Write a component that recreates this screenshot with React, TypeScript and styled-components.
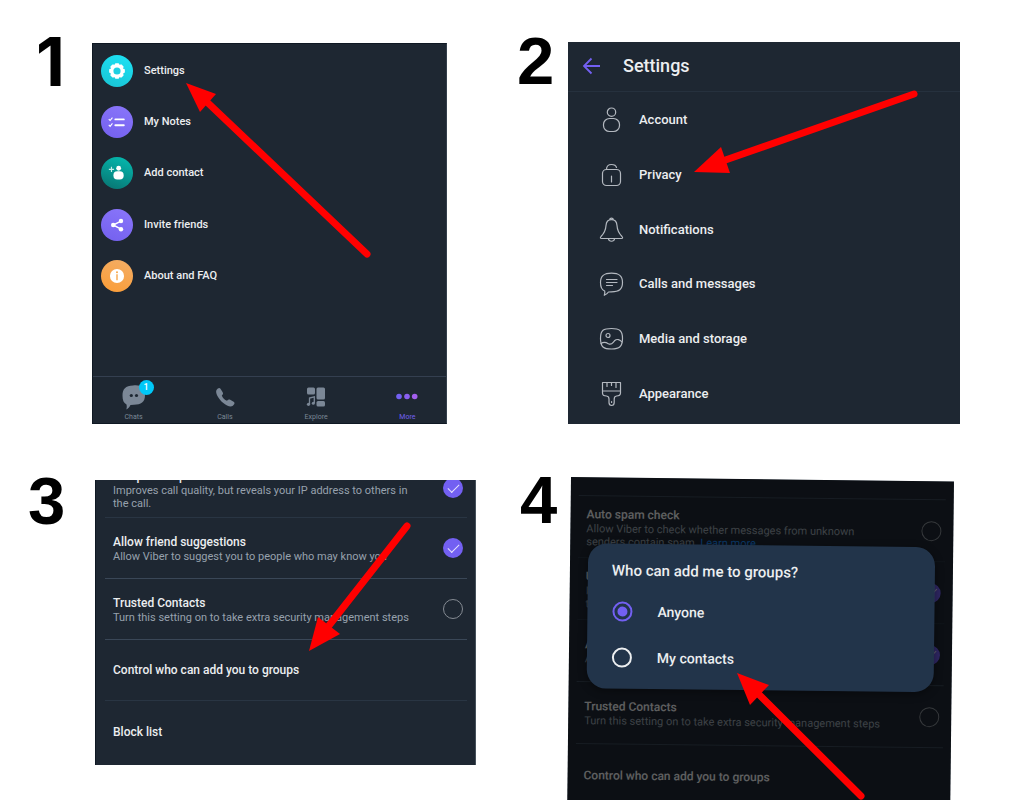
import React from "react";
import styled, { createGlobalStyle, css } from "styled-components";

const GlobalStyle = createGlobalStyle`
  * { box-sizing: border-box; }
  body { margin: 0; background: #fff; font-family: Roboto, "Liberation Sans", sans-serif; }
  h2, h3, p, ul { margin: 0; padding: 0; }
  ul { list-style: none; }
`;

const Page = styled.main`
  display: grid;
  grid-template-columns: 448fr 444fr;
  grid-template-rows: auto 1fr;
  column-gap: 40px;
  row-gap: 53px;
  align-items: start;
  height: 100vh;
  overflow: hidden;
  padding: 42px 57px 0 28px;
`;

const Step = styled.section<{ $num: number; $end?: number }>`
  display: grid;
  grid-template-columns: ${(p) => p.$num}px minmax(0, 1fr);
  align-items: start;
  padding-right: ${(p) => p.$end ?? 0}px;
`;

const StepNumber = styled.h2<{ $indent?: number; $lift: number; $footless?: boolean }>`
  margin: -${(p) => p.$lift}px 0 0 ${(p) => p.$indent ?? 0}px;
  font-family: "Liberation Sans", Arial, sans-serif;
  font-size: 67px;
  font-weight: 700;
  line-height: 68px;
  color: #000;
  ${(p) =>
    p.$footless &&
    css`
      font-family: Inter, sans-serif;
    `}
`;

const Stage = styled.div<{ $top?: number }>`
  position: relative;
  margin-top: ${(p) => p.$top ?? 0}px;
`;

const Screen = styled.div`
  display: flex;
  flex-direction: column;
  overflow: hidden;
  background: #1e2732;
  color: #eceef0;
`;

const MoreScreen = styled(Screen)`
  border: 1px solid #0f1823;
  border-right-color: #35404c;
`;

const MenuList = styled.ul`
  display: grid;
  grid-template-rows: repeat(5, 1fr);
  height: 258px;
  padding-top: 1px;
`;

const MenuItem = styled.li`
  display: flex;
  align-items: center;
  gap: 11px;
  padding-left: 8px;
  font-size: 11px;
  font-weight: 500;
  line-height: 16px;
`;

const RoundIcon = styled.span<{ $from: string; $to: string }>`
  display: flex;
  width: 32px;
  height: 32px;
  border-radius: 50%;
  background: linear-gradient(200deg, ${(p) => p.$from}, ${(p) => p.$to});
  svg { width: 100%; height: 100%; }
`;

const TabBar = styled.nav`
  display: grid;
  grid-template-columns: repeat(4, 1fr);
  height: 47px;
  margin: 74px -7px 0 -5px;
  border-top: 1px solid #343f50;
`;

const Tab = styled.a<{ $active?: boolean }>`
  position: relative;
  display: flex;
  flex-direction: column;
  align-items: center;
  gap: 1px;
  padding-top: 7px;
  font-size: 7px;
  line-height: 10px;
  text-decoration: none;
  color: ${(p) => (p.$active ? "#7360f2" : "#7b8796")};
`;

const Badge = styled.span`
  position: absolute;
  top: 3px;
  left: calc(50% + 5px);
  width: 15px;
  height: 15px;
  border-radius: 50%;
  background: #00c8f8;
  color: #fff;
  font-size: 9px;
  font-weight: 500;
  line-height: 15px;
  text-align: center;
`;

const AppHeader = styled.header`
  display: flex;
  align-items: center;
  gap: 21px;
  height: 50px;
  padding: 0 0 2px 14px;
  border-bottom: 1px solid #26313e;
`;

const BackButton = styled.button`
  display: flex;
  padding: 0;
  border: 0;
  background: none;
  color: #7360f2;
`;

const AppTitle = styled.h3`
  font-size: 18px;
  font-weight: 500;
  line-height: 24px;
`;

const SettingsList = styled.ul`
  display: grid;
  grid-template-rows: repeat(6, 1fr);
  height: 332px;
  padding: 1px 0 3px;
`;

const SettingsItem = styled.li`
  display: flex;
  align-items: center;
  gap: 15px;
  padding-left: 31px;
  font-size: 13px;
  font-weight: 500;
  line-height: 16px;
  svg { color: #b4b9c0; }
`;

const PrivacyScreen = styled(Screen)`
  height: 285px;
  padding: 0 8px 0 9px;
  border-left: 1px solid #0f1823;
  border-right: 1px solid #46515b;
`;

const TiltedScreen = styled(Screen)`
  position: relative;
  height: 350px;
  padding: 0 8px;
  transform: rotate(0.66deg);
  transform-origin: top left;
`;

const Row = styled.label<{ $tall?: boolean; $strong?: boolean; $clipped?: number }>`
  display: flex;
  flex: none;
  align-items: center;
  justify-content: space-between;
  height: ${(p) => (p.$tall ? 62 : 61)}px;
  padding: 0 4px 0 8px;
  border-bottom: 1px solid ${(p) => (p.$strong ? "#3a4757" : "#293543")};
  ${(p) =>
    p.$clipped &&
    css`
      height: ${p.$clipped}px;
      align-items: flex-end;
      padding-bottom: 7px;
      input { margin-bottom: 12px; }
    `}
  &:last-child { border-bottom: 0; }
`;

const RowText = styled.span`
  display: flex;
  flex-direction: column;
`;

const RowTitle = styled.span`
  font-size: 12px;
  font-weight: 500;
  line-height: 16px;
`;

const RowNote = styled.span`
  font-size: 11px;
  line-height: 13px;
  color: #97a1ad;
  white-space: pre;
`;

const NoteLink = styled.a`
  color: #1a8cff;
  text-decoration: none;
`;

const Toggle = styled.input`
  flex: none;
  display: grid;
  place-items: center;
  appearance: none;
  width: 20px;
  height: 20px;
  margin: 0;
  border: 1px solid #858b93;
  border-radius: 50%;
  &:checked { border: 0; background: #7360f2; }
  &:checked::after {
    content: "";
    width: 10px;
    height: 5px;
    margin-top: -3px;
    border: solid #e6e2ff;
    border-width: 0 0 1px 1px;
    transform: rotate(-45deg);
  }
`;

const Scrim = styled.div`
  position: absolute;
  inset: 0;
  background: rgba(0, 0, 0, 0.6);
`;

const Dialog = styled.fieldset`
  position: absolute;
  top: 66px;
  left: 18px;
  right: 18px;
  min-height: 145px;
  margin: 0;
  padding: 15px 24px 0;
  border: 0;
  border-radius: 19px;
  background: #22344a;
  box-shadow: 0 2px 8px rgba(0, 0, 0, 0.4);
`;

const DialogTitle = styled.h3`
  font-size: 15px;
  font-weight: 500;
  line-height: 24px;
  margin-bottom: 6px;
`;

const Option = styled.label`
  display: flex;
  align-items: center;
  gap: 25px;
  height: 46px;
  padding-left: 1px;
  font-size: 14px;
  font-weight: 500;
`;

const Radio = styled.input`
  display: grid;
  place-items: center;
  appearance: none;
  width: 20px;
  height: 20px;
  margin: 0;
  border: 2px solid #eceef0;
  border-radius: 50%;
  &:checked { border-color: #7360f2; }
  &:checked::after {
    content: "";
    width: 10px;
    height: 10px;
    border-radius: 50%;
    background: #7360f2;
  }
`;

const ArrowLayer = styled.svg`
  position: absolute;
  top: 0;
  left: 0;
  overflow: visible;
  pointer-events: none;
`;

type Point = [number, number];

/* Red callout arrow: `head` is the tip followed by the two barbs. */
function Arrow({ head, tail }: { head: [Point, Point, Point]; tail: Point }) {
  const [, a, b] = head;
  return (
    <ArrowLayer width="1" height="1" aria-hidden="true">
      <line
        x1={(a[0] + b[0]) / 2}
        y1={(a[1] + b[1]) / 2}
        x2={tail[0]}
        y2={tail[1]}
        stroke="#f00"
        strokeWidth="7"
        strokeLinecap="round"
      />
      <polygon points={head.map((p) => p.join(",")).join(" ")} fill="#f00" />
    </ArrowLayer>
  );
}

const GearIcon = () => (
  <svg viewBox="0 0 33 33">
    {[0, 45, 90, 135].map((a) => (
      <rect key={a} x="14.2" y="8.4" width="4.6" height="16.2" rx="1.2" fill="#fff" transform={`rotate(${a} 16.5 16.5)`} />
    ))}
    <circle cx="16.5" cy="16.5" r="6.9" fill="#fff" />
    <circle cx="16.5" cy="16.5" r="3.7" fill="#1fd0e2" />
  </svg>
);

const NotesIcon = () => (
  <svg viewBox="0 0 33 33" fill="none" stroke="#fff">
    <path d="M8 13.5l1.4 1.5 2.4-3M8 19.5l1.4 1.5 2.4-3" strokeWidth="1.1" />
    <path d="M14.8 13.8H23.5M14.8 19.8H23.5" strokeWidth="2" strokeLinecap="round" />
  </svg>
);

const AddContactIcon = () => (
  <svg viewBox="0 0 33 33" fill="#fff">
    <path d="M10.8 10v5.4M8.1 12.7h5.4" stroke="#c8eeea" strokeWidth="1.2" />
    <circle cx="18.2" cy="11.6" r="2.5" />
    <rect x="12.8" y="14.8" width="10.6" height="8.4" rx="4" />
  </svg>
);

const ShareIcon = () => (
  <svg viewBox="0 0 33 33" fill="#fff">
    <path d="M20.6 12.4l-8 4.1 8 4.3" fill="none" stroke="#fff" strokeWidth="1.5" />
    <circle cx="12.6" cy="16.5" r="2.3" />
    <circle cx="20.6" cy="12.3" r="2.3" />
    <circle cx="20.6" cy="20.8" r="2.3" />
  </svg>
);

const InfoIcon = () => (
  <svg viewBox="0 0 33 33">
    <circle cx="16.5" cy="16.5" r="7.3" fill="#fff" />
    <circle cx="16.5" cy="12.6" r="1" fill="#f7a547" />
    <path d="M16.5 14.8v6" stroke="#f7a547" strokeWidth="1.4" />
  </svg>
);

const ChatsIcon = () => (
  <svg width="26" height="27" viewBox="0 0 26 27" fill="#7b8796">
    <path d="M12 1.5C20 .5 24 3.5 24 11S20 20.5 13 20.8L9.5 21C8.5 23.5 7 24.5 5.3 25.5C6 23.5 5.8 22 5.5 20.5C2.5 19 1.5 16 1.5 11.5C1.5 5 4.5 1.8 12 1.5Z" />
    <circle cx="10.3" cy="11.5" r="1.6" fill="#1e2732" />
    <circle cx="15.5" cy="11.5" r="1.6" fill="#1e2732" />
  </svg>
);

const CallsIcon = () => (
  <svg width="26" height="27" viewBox="0 0 26 27" fill="#7b8796">
    <path d="M4.5 6C5.8 4.2 7.3 3.3 8.5 4.7L10.8 8.5C11.4 9.8 10.8 10.6 9.8 11.5C10.6 13.9 12.7 16 15 16.8C16 15.7 17 15.1 18.2 15.8L22 18.1C23.3 19.2 22 20.8 20.5 22C18.5 23.3 14.5 21.8 11 18.8C7 15.4 2.8 9.1 4.5 6Z" />
  </svg>
);

const ExploreIcon = () => (
  <svg width="26" height="27" viewBox="0 0 26 27" fill="#7b8796">
    <rect x="4" y="3.5" width="8" height="7" rx="1.5" />
    <rect x="13.5" y="3.5" width="8.5" height="12" rx="1.5" />
    <rect x="13.5" y="17" width="8.5" height="5.5" rx="1.5" />
    <path d="M6.5 20V14L11.3 12.8V19" fill="none" stroke="#7b8796" strokeWidth="1.3" />
    <circle cx="5.5" cy="20.3" r="1.6" />
    <circle cx="10.3" cy="19.3" r="1.5" />
  </svg>
);

const MoreIcon = () => (
  <svg width="26" height="27" viewBox="0 0 26 27">
    <circle cx="5" cy="12.5" r="2.8" fill="#7360f2" />
    <circle cx="13" cy="12.5" r="2.8" fill="#8a5ff0" />
    <circle cx="20.7" cy="12.5" r="2.8" fill="#a35fee" />
  </svg>
);

const LineIcon = ({ children }: { children: React.ReactNode }) => (
  <svg
    width="25"
    height="26"
    viewBox="0 0 25 26"
    fill="none"
    stroke="currentColor"
    strokeWidth="1.2"
    strokeLinecap="round"
    strokeLinejoin="round"
  >
    {children}
  </svg>
);

const settings = [
  {
    label: "Account",
    icon: (
      <>
        <circle cx="12.5" cy="5.2" r="4.2" />
        <rect x="4.5" y="11.5" width="16" height="13" rx="6" />
      </>
    ),
  },
  {
    label: "Privacy",
    icon: (
      <>
        <rect x="3.5" y="7.5" width="18" height="16" rx="4" />
        <path d="M7.5 7.5C7.5 4 9.5 2.5 12.5 2.5C15.3 2.5 17 3.5 17.5 5.5M12.5 14v6" />
      </>
    ),
  },
  {
    label: "Notifications",
    icon: (
      <path d="M10.8 2.2C11 .8 14 .8 14.2 2.2M7 8.5C7.3 4.5 9 2.7 12.5 2.7S17.7 4.5 18 8.5C18.3 14 20 16.5 23 19.5C24.2 21 23.5 21.5 22.5 21.5H2.5C1.5 21.5 .8 21 2 19.5C5 16.5 6.7 14 7 8.5ZM9.5 22C10 25 15 25 15.5 22" />
    ),
  },
  {
    label: "Calls and messages",
    icon: (
      <>
        <path d="M12.5 2.2C20 2.2 23.5 4.5 23.5 11.5S20 20.5 12.5 20.8L9.5 21C8.5 22.5 7 23.7 5.3 24.3C6 22.5 6 21.5 5.7 20C2.5 18.8 1.5 15.5 1.5 11.5C1.5 4.5 5 2.2 12.5 2.2Z" />
        <path d="M7.5 8.5H18M7.5 11.5H18M7.5 14.5H13.5" />
      </>
    ),
  },
  {
    label: "Media and storage",
    icon: (
      <>
        <path d="M12.5 2.5C20.5 2.5 23.5 4.5 23.5 12.5S20.5 23 12.5 23S1.5 21 1.5 12.5S4.5 2.5 12.5 2.5Z" />
        <circle cx="9" cy="9.5" r="2" />
        <path d="M2 17.5C5.5 15 7.5 16.5 9.5 17.8C12.5 19.5 13.5 17 15.5 14.8C18 12.5 21 13.5 23 16" />
      </>
    ),
  },
  {
    label: "Appearance",
    icon: (
      <path d="M3.5 1.5H21.5V12C21.5 14.5 19.5 15 17.5 15C15.5 15.3 15.2 16 15.2 18V21.5C15.2 25.5 10 25.5 10 21.5V18C10 16 9.5 15.3 7.5 15C5.5 15 3.5 14.5 3.5 12ZM3.5 10H21.5M8 1.5V5.5M12.5 1.5V4.5M17 1.5V6.5M12.6 20.5V21.5" />
    ),
  },
];

const menu = [
  { label: "Settings", from: "#1de3f6", to: "#19c3d3", icon: <GearIcon /> },
  { label: "My Notes", from: "#8a76fa", to: "#7360ee", icon: <NotesIcon /> },
  { label: "Add contact", from: "#05bdb2", to: "#08716f", icon: <AddContactIcon /> },
  { label: "Invite friends", from: "#8a76fa", to: "#7360ee", icon: <ShareIcon /> },
  { label: "About and FAQ", from: "#f3ae67", to: "#fb9c35", icon: <InfoIcon /> },
];

function SettingRow({
  title,
  note,
  checked,
  toggle = true,
  ...row
}: {
  title: string;
  note?: React.ReactNode;
  checked?: boolean;
  toggle?: boolean;
  $tall?: boolean;
  $strong?: boolean;
  $clipped?: number;
}) {
  return (
    <Row as={toggle ? "label" : "div"} {...row}>
      <RowText>
        <RowTitle>{title}</RowTitle>
        {note && <RowNote>{note}</RowNote>}
      </RowText>
      {toggle && <Toggle type="checkbox" defaultChecked={checked} />}
    </Row>
  );
}

const peerNote = "Improves call quality, but reveals your IP address to others in\nthe call.";
const friendNote = "Allow Viber to suggest you to people who may know you";
const trustedNote = "Turn this setting on to take extra security management steps";

export default function App() {
  return (
    <>
      <GlobalStyle />
      <Page>
        <Step $num={64} $end={29}>
          <StepNumber $lift={14} $indent={8} $footless>1</StepNumber>
          <Stage $top={1}>
            <MoreScreen>
              <MenuList>
                {menu.map((m) => (
                  <MenuItem key={m.label}>
                    <RoundIcon $from={m.from} $to={m.to}>{m.icon}</RoundIcon>
                    {m.label}
                  </MenuItem>
                ))}
              </MenuList>
              <TabBar>
                <Tab href="#chats"><ChatsIcon />Chats<Badge>1</Badge></Tab>
                <Tab href="#calls"><CallsIcon />Calls</Tab>
                <Tab href="#explore"><ExploreIcon />Explore</Tab>
                <Tab href="#more" $active><MoreIcon />More</Tab>
              </TabBar>
            </MoreScreen>
            <Arrow head={[[94, 40], [124, 51], [108, 69]]} tail={[275, 211]} />
          </Stage>
        </Step>

        <Step $num={52}>
          <StepNumber $lift={15} $indent={1}>2</StepNumber>
          <Stage>
            <Screen>
              <AppHeader>
                <BackButton aria-label="Back">
                  <svg width="20" height="20" viewBox="0 0 20 20" fill="none" stroke="currentColor" strokeWidth="1.8">
                    <path d="M18 10H2.5M9.5 2.5L2 10L9.5 17.5" />
                  </svg>
                </BackButton>
                <AppTitle>Settings</AppTitle>
              </AppHeader>
              <SettingsList>
                {settings.map((s) => (
                  <SettingsItem key={s.label}>
                    <LineIcon>{s.icon}</LineIcon>
                    {s.label}
                  </SettingsItem>
                ))}
              </SettingsList>
            </Screen>
            <Arrow head={[[126, 130], [153, 105], [162, 131]]} tail={[346, 52]} />
          </Stage>
        </Step>

        <Step $num={67}>
          <StepNumber $lift={10}>3</StepNumber>
          <Stage $top={3}>
            <PrivacyScreen>
              <SettingRow title="Use peer-to-peer" note={peerNote} checked $clipped={38} />
              <SettingRow title="Allow friend suggestions" note={friendNote} checked $strong />
              <SettingRow title="Trusted Contacts" note={trustedNote} $strong />
              <SettingRow title="Control who can add you to groups" toggle={false} />
              <SettingRow title="Block list" toggle={false} />
            </PrivacyScreen>
            <Arrow head={[[214, 171], [223, 137], [245, 154]]} tail={[312, 46]} />
          </Stage>
        </Step>

        <Step $num={55} $end={6}>
          <StepNumber $lift={11} $indent={4}>4</StepNumber>
          <Stage>
            <TiltedScreen>
              <SettingRow title="" toggle={false} $clipped={19} $strong />
              <SettingRow
                title="Auto spam check"
                note={<>Allow Viber to check whether messages from unknown{"\n"}senders contain spam. <NoteLink href="#learn">Learn more</NoteLink></>}
                $tall
              />
              <SettingRow title="Use peer-to-peer" note={peerNote} checked $tall />
              <SettingRow title="Allow friend suggestions" note={friendNote} checked $tall $strong />
              <SettingRow title="Trusted Contacts" note={trustedNote} $tall $strong />
              <SettingRow title="Control who can add you to groups" toggle={false} $tall />
              <Scrim />
              <Dialog aria-labelledby="groups-title">
                <DialogTitle id="groups-title">Who can add me to groups?</DialogTitle>
                <Option><Radio type="radio" name="groups" defaultChecked />Anyone</Option>
                <Option><Radio type="radio" name="groups" />My contacts</Option>
              </Dialog>
            </TiltedScreen>
            <Arrow head={[[166, 196], [198, 208], [179, 228]]} tail={[290, 319]} />
          </Stage>
        </Step>
      </Page>
    </>
  );
}
